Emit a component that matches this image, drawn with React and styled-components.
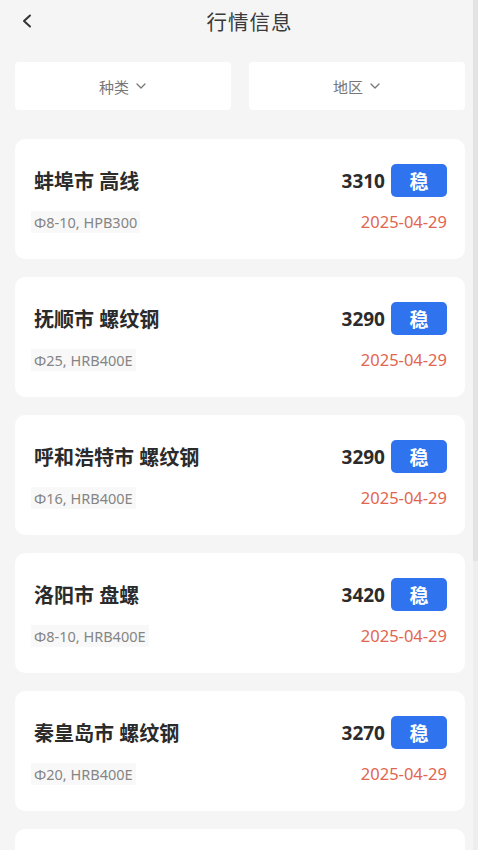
import styled, { createGlobalStyle } from 'styled-components';

const GlobalStyle = createGlobalStyle`
  body {
    margin: 0;
    background: #f5f5f5;
    font-family: 'Noto Sans', 'Noto Sans CJK SC', sans-serif;
  }
`;

const quotes = [
  { city: '蚌埠市', kind: '高线', spec: 'Φ8-10, HPB300', price: 3310, date: '2025-04-29' },
  { city: '抚顺市', kind: '螺纹钢', spec: 'Φ25, HRB400E', price: 3290, date: '2025-04-29' },
  { city: '呼和浩特市', kind: '螺纹钢', spec: 'Φ16, HRB400E', price: 3290, date: '2025-04-29' },
  { city: '洛阳市', kind: '盘螺', spec: 'Φ8-10, HRB400E', price: 3420, date: '2025-04-29' },
  { city: '秦皇岛市', kind: '螺纹钢', spec: 'Φ20, HRB400E', price: 3270, date: '2025-04-29' },
];

const Chevron = () => (
  <svg width='12' height='12' viewBox='0 0 12 12' fill='none'>
    <path d='M2 4 L6 8 L10 4' stroke='#777' strokeWidth='1.3' strokeLinecap='round' strokeLinejoin='round' />
  </svg>
);

const App = () => {
  return (
    <Screen>
      <GlobalStyle />
      <Content>
        <Header>
          <BackButton aria-label='返回'>
            <svg width='12' height='14' viewBox='0 0 12 14' fill='none'>
              <path d='M9 1.5 L3 7 L9 12.5' stroke='#333' strokeWidth='2' strokeLinecap='round' strokeLinejoin='round' />
            </svg>
          </BackButton>
          <Title>行情信息</Title>
        </Header>

        <Filters>
          <FilterBox>
            种类 <Chevron />
          </FilterBox>
          <FilterBox>
            地区 <Chevron />
          </FilterBox>
        </Filters>

        <List>
          {quotes.map((q, i) => (
            <Card key={i}>
              <Row>
                <Name>
                  {q.city} {q.kind}
                </Name>
                <PriceWrap>
                  <Price>{q.price}</Price>
                  <Badge>稳</Badge>
                </PriceWrap>
              </Row>
              <Row>
                <Spec>{q.spec}</Spec>
                <DateText>{q.date}</DateText>
              </Row>
            </Card>
          ))}
          <Card />
        </List>
      </Content>
      <ScrollTrack>
        <ScrollThumb $ratio={0.66} />
      </ScrollTrack>
    </Screen>
  );
};

export default App;

const Screen = styled.div`
  position: relative;
  height: 100vh;
  overflow: hidden;
`;

const Content = styled.div`
  padding: 0 13px 0 15px;
`;

const ScrollTrack = styled.div`
  position: absolute;
  top: 0;
  right: 0;
  bottom: 0;
  width: 5px;
  background: #eeeeee;
`;

const ScrollThumb = styled.div`
  height: ${p => p.$ratio * 100}%;
  background: #e3e3e3;
`;

const Header = styled.header`
  position: relative;
  height: 42px;
  display: flex;
  align-items: center;
  justify-content: center;
`;

const BackButton = styled.button`
  position: absolute;
  left: 6px;
  top: 14px;
  padding: 0;
  border: none;
  background: none;
  display: flex;
`;

const Title = styled.h1`
  margin: 0 0 0 19px;
  font-size: 20.5px;
  font-weight: 400;
  color: #3a3a3a;
  letter-spacing: 1px;
`;

const Filters = styled.div`
  margin-top: 20px;
  display: grid;
  grid-template-columns: 1fr 1fr;
  gap: 18px;
`;

const FilterBox = styled.div`
  height: 48px;
  background: #fff;
  border-radius: 4px;
  display: flex;
  align-items: center;
  justify-content: center;
  gap: 6px;
  font-size: 15px;
  color: #777;
`;

const List = styled.div`
  margin-top: 29px;
  display: flex;
  flex-direction: column;
  gap: 18px;
`;

const Card = styled.div`
  height: 120px;
  flex-shrink: 0;
  box-sizing: border-box;
  background: #fff;
  border-radius: 10px;
  padding: 25px 18px 0 19px;
  display: flex;
  flex-direction: column;
  gap: 14px;
`;

const Row = styled.div`
  display: flex;
  align-items: center;
  justify-content: space-between;
`;

const Name = styled.div`
  font-size: 20px;
  font-weight: 700;
  color: #2b2b2b;
`;

const PriceWrap = styled.div`
  display: flex;
  align-items: center;
  gap: 6px;
`;

const Price = styled.span`
  font-size: 19px;
  font-weight: 700;
  color: #2b2b2b;
`;

const Badge = styled.span`
  width: 56px;
  height: 33px;
  border-radius: 5px;
  background: #2f73ee;
  color: #fff;
  font-size: 19px;
  font-weight: 700;
  display: flex;
  align-items: center;
  justify-content: center;
`;

const Spec = styled.span`
  font-size: 14.5px;
  line-height: 22px;
  color: #858585;
  background: #f8f8f8;
  padding: 0 3px;
  margin-left: -3px;
`;

const DateText = styled.span`
  font-size: 16.5px;
  line-height: 22px;
  color: #e2654f;
`;
